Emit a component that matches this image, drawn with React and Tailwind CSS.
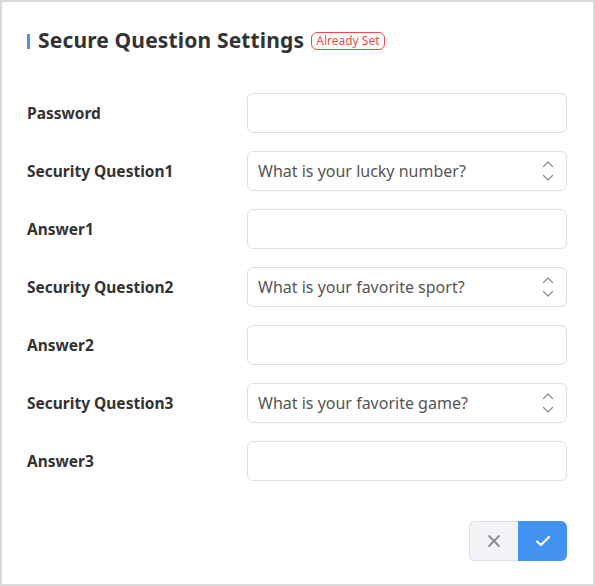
import React from 'react';

const rows = [
  { label: 'Password', type: 'input' },
  { label: 'Security Question1', type: 'select', value: 'What is your lucky number?' },
  { label: 'Answer1', type: 'input' },
  { label: 'Security Question2', type: 'select', value: 'What is your favorite sport?' },
  { label: 'Answer2', type: 'input' },
  { label: 'Security Question3', type: 'select', value: 'What is your favorite game?' },
  { label: 'Answer3', type: 'input' },
];

const Chevrons = () => (
  <svg width="12" height="22" viewBox="0 0 12 22" fill="none" stroke="#8c8c8c" strokeWidth="1.2" strokeLinecap="round" strokeLinejoin="round">
    <path d="M1.5 6.5 L6 2 L10.5 6.5" />
    <path d="M1.5 15.5 L6 20 L10.5 15.5" />
  </svg>
);

const App = () => {
  return (
    <div className="w-[595px] h-[586px] border-2 border-[#d9d9d9] bg-white font-['Noto_Sans',sans-serif] text-[#333]">
      <div className="pl-[25px] pr-[26px] pt-[25px]">
        <div className="flex items-center h-[28px]">
          <span className="w-[3px] h-[15px] bg-[#4a94f0] mr-[8px]" />
          <h2 className="text-[21px] font-bold text-[#333] tracking-[0.15px]">Secure Question Settings</h2>
          <span className="ml-[7px] h-[18px] px-[4px] flex items-center border border-[#ef4b4b] rounded-[6px] text-[12px] text-[#ef4b4b] leading-none">
            Already Set
          </span>
        </div>

        <div className="mt-[38px] flex flex-col gap-[18px]">
          {rows.map((row) => (
            <div key={row.label} className="flex items-center h-[40px]">
              <div className="w-[220px] pt-[2px] text-[15.5px] font-bold text-[#333]">{row.label}</div>
              <div className="w-[320px] h-[40px] border border-[#dcdfe6] rounded-[6px] flex items-center pl-[10px] pr-[12px]">
                {row.type === 'select' && (
                  <>
                    <span className="flex-1 text-[16px] text-[#555]">{row.value}</span>
                    <Chevrons />
                  </>
                )}
              </div>
            </div>
          ))}
        </div>

        <div className="mt-[40px] flex justify-end">
          <div className="flex h-[40px]">
            <button className="w-[49px] h-[40px] bg-[#f3f4f8] border border-[#dcdfe6] border-r-0 rounded-l-[6px] flex items-center justify-center">
              <svg width="14" height="14" viewBox="0 0 14 14" stroke="#8c8c8c" strokeWidth="1.8" strokeLinecap="round">
                <path d="M2 2 L12 12 M12 2 L2 12" />
              </svg>
            </button>
            <button className="w-[49px] h-[40px] bg-[#4394f2] rounded-r-[6px] flex items-center justify-center">
              <svg width="16" height="14" viewBox="0 0 16 14" fill="none" stroke="#fff" strokeWidth="2.2" strokeLinecap="round" strokeLinejoin="round">
                <path d="M2 7.5 L6 11 L14 3" />
              </svg>
            </button>
          </div>
        </div>
      </div>
    </div>
  );
};

export default App;
